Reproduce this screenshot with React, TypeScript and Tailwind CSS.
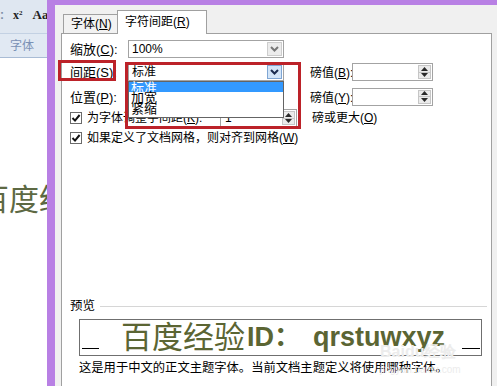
import React from 'react';

const CJK = "font-['Liberation_Sans','Noto_Sans_CJK_SC',sans-serif]";

function Chevron({ color }: { color: string }) {
  return (
    <svg width="9" height="6" viewBox="0 0 9 6">
      <path d="M1 1 L4.5 4.5 L8 1" fill="none" stroke={color} strokeWidth="2" />
    </svg>
  );
}

function Combo({ value, hot }: { value: string; hot?: boolean }) {
  return (
    <div className="flex h-[18px] w-[156px] items-center border border-[#a3a3a3] bg-white">
      <span className="flex-1 pl-[3px] text-[12px] leading-none">{value}</span>
      <span
        className={
          hot
            ? 'mr-px flex h-[14px] w-[15px] items-center justify-center border border-[#7fa6d4] bg-[#d3e5f8]'
            : 'mr-px flex h-[14px] w-[15px] items-center justify-center border border-[#cdcdcd] bg-[#ececec]'
        }
      >
        <Chevron color={hot ? '#1b2b4f' : '#777777'} />
      </span>
    </div>
  );
}

function Spinner() {
  return (
    <span className="mr-px flex h-[14px] w-[13px] flex-col border border-[#c6c6c6] bg-[#ebebeb]">
      <span className="flex flex-1 items-center justify-center border-b border-[#c6c6c6]">
        <svg width="7" height="4" viewBox="0 0 7 4">
          <path d="M0 4 L3.5 0 L7 4Z" fill="#2a2a2a" />
        </svg>
      </span>
      <span className="flex flex-1 items-center justify-center">
        <svg width="7" height="4" viewBox="0 0 7 4">
          <path d="M0 0 L7 0 L3.5 4Z" fill="#2a2a2a" />
        </svg>
      </span>
    </span>
  );
}

function SpinBox({ value = '', width }: { value?: string; width: string }) {
  return (
    <div className={`flex h-[18px] shrink-0 items-center border border-[#a3a3a3] bg-white ${width}`}>
      <span className="flex-1 pl-[4px] text-[12px] leading-none">{value}</span>
      <Spinner />
    </div>
  );
}

function Check() {
  return (
    <span className="flex h-[12px] w-[12px] shrink-0 items-center justify-center border border-[#6a6a6a] bg-white">
      <svg width="10" height="10" viewBox="0 0 10 10">
        <path d="M1.5 5 L4 7.6 L8.6 2" fill="none" stroke="#111" strokeWidth="2" />
      </svg>
    </span>
  );
}

function Label({ text, k, small }: { text: string; k: string; small?: boolean }) {
  return (
    <span className={`whitespace-nowrap leading-none text-black ${small ? 'text-[12px]' : 'text-[13px]'}`}>
      {text}(<u>{k}</u>):
    </span>
  );
}

export default function App() {
  return (
    <div className={`flex h-[386px] w-[497px] overflow-hidden bg-white ${CJK}`}>
      {/* Word 文档背景 */}
      <div className="flex w-[47px] shrink-0 flex-col overflow-hidden">
        <div className="flex h-[34px] items-center gap-[10px] border-b border-[#c3d1e3] bg-[#dfe7f1] pb-[4px] text-[12px] font-bold text-[#222]">
          <span className="w-[3px] text-[#7e8ea6]">:</span>
          <span className="font-['Liberation_Serif',serif]">
            x<sup className="text-[7px]">2</sup>
          </span>
          <span className="font-['Liberation_Serif',serif] text-[13px]">Aa</span>
        </div>
        <div className="flex h-[24px] items-center border-b border-[#a9bcd5] bg-[#e1e9f3] pl-[10px] text-[12px] text-[#7a91b5]">
          字体
        </div>
        <div className="flex-1 bg-white pt-[127px]">
          <div className="ml-[-21px] whitespace-nowrap text-[30px] leading-none text-[#5d6943]">
            百度经
          </div>
        </div>
      </div>

      {/* 字体对话框 */}
      <div className="flex flex-1 flex-col border-l-[8px] border-t-[5px] border-[#b880e4] bg-[#f0f0f0] pl-[6px] pr-[5px]">
        <div className="flex h-[28px] items-end pl-[2px]">
          <div className="flex h-[19px] w-[54px] items-center border-l border-t border-[#a0a0a0] bg-[#f2f2f2] pl-[7px] text-[12px] leading-none">
            字体(<u>N</u>)
          </div>
          <div className="relative z-10 -mb-px flex h-[24px] w-[90px] items-start border-l border-r border-t border-[#a0a0a0] bg-white pl-[7px] pt-[5px] text-[12px] leading-none">
            字符间距(<u>R</u>)
          </div>
        </div>

        <div className="relative flex flex-1 flex-col border-l border-r border-t border-[#a0a0a0] bg-white pl-[8px] pr-[4px]">
          {/* 行 */}
          <div className="flex flex-col pt-[6px]">
            <div className="flex h-[18px] items-center">
              <span className="w-[58px] shrink-0">
                <Label text="缩放" k="C" />
              </span>
              <Combo value="100%" />
            </div>
            <div className="mt-[5px] flex h-[18px] items-center">
              <span className="w-[58px] shrink-0">
                <Label text="间距" k="S" />
              </span>
              <Combo value="标准" hot />
              <span className="ml-[26px] w-[42px] shrink-0">
                <Label text="磅值" k="B" small />
              </span>
              <SpinBox width="w-[81px]" />
            </div>
            <div className="mt-[7px] flex h-[17px] items-center">
              <span className="w-[58px] shrink-0">
                <Label text="位置" k="P" />
              </span>
              <Combo value="标准" />
              <span className="ml-[26px] w-[42px] shrink-0">
                <Label text="磅值" k="Y" small />
              </span>
              <SpinBox width="w-[81px]" />
            </div>
            <div className="mt-[5px] flex h-[16px] items-center">
              <Check />
              <span className="ml-[5px] w-[133px] shrink-0 whitespace-nowrap text-[12px] leading-none">
                为字体调整字间距(<u>K</u>):
              </span>
              <SpinBox value="1" width="w-[77px]" />
              <span className="ml-[15px] whitespace-nowrap text-[12px] leading-none">
                磅或更大(<u>O</u>)
              </span>
            </div>
            <div className="mt-[5px] flex h-[14px] items-center">
              <Check />
              <span className="ml-[5px] whitespace-nowrap text-[12px] leading-none">
                如果定义了文档网格，则对齐到网格(<u>W</u>)
              </span>
            </div>
          </div>

          {/* 预览 */}
          <div className="mt-[155px] flex items-center">
            <span className="text-[12.5px] leading-none">预览</span>
            <span className="ml-[5px] h-px flex-1 bg-[#d6d6d6]" />
          </div>
          <div className="relative ml-[9px] mr-[5px] mt-[6px] flex h-[37px] items-center border border-[#6f6f6f] pl-[41px] leading-none text-[#5b6533]">
            <span className="absolute bottom-[6px] left-[2px] h-px w-[17px] bg-black" />
            <span className="absolute bottom-[6px] right-[1px] h-px w-[18px] bg-black" />
            <span className="text-[31px]">百度经验</span>
            <span className="ml-[2px] font-['Liberation_Sans',sans-serif] text-[27px] font-bold">ID</span>
            <span className="text-[27px] font-bold">：</span>
            <span className="ml-[12px] font-['Liberation_Sans',sans-serif] text-[27px] font-bold">
              qrstuwxyz
            </span>
          </div>
          <div className="ml-[9px] mt-[5px] whitespace-nowrap text-[12.3px] leading-[14px] text-black">
            这是用于中文的正文主题字体。当前文档主题定义将使用哪种字体。
          </div>

          {/* 水印 */}
          <div className="pointer-events-none absolute left-[318px] top-[310px] flex flex-col items-start leading-none text-[#ececec]">
            <span className="font-['Liberation_Sans',sans-serif] text-[16px] font-bold">Baidu经验</span>
            <span className="mt-[5px] font-['Liberation_Sans',sans-serif] text-[10px]">jingyan.baidu.com</span>
          </div>

          {/* 下拉列表 */}
          <div className="absolute left-[66px] top-[47px] z-20 flex h-[37px] w-[156px] flex-col border border-[#646464] bg-white text-[13px]">
            <span className="h-[10px] overflow-visible bg-[#3399ff] pl-[2px] leading-[11px] text-white">标准</span>
            <span className="pl-[2px] leading-[11px]">加宽</span>
            <span className="pl-[2px] leading-[11px]">紧缩</span>
          </div>

          {/* 红框 */}
          <div className="absolute left-[-4px] top-[26px] z-30 h-[21px] w-[58px] border-[3px] border-[#bc2229]" />
          <div className="absolute left-[63px] top-[28px] z-30 h-[67px] w-[176px] border-[3px] border-[#bc2229]" />
        </div>
      </div>
    </div>
  );
}
